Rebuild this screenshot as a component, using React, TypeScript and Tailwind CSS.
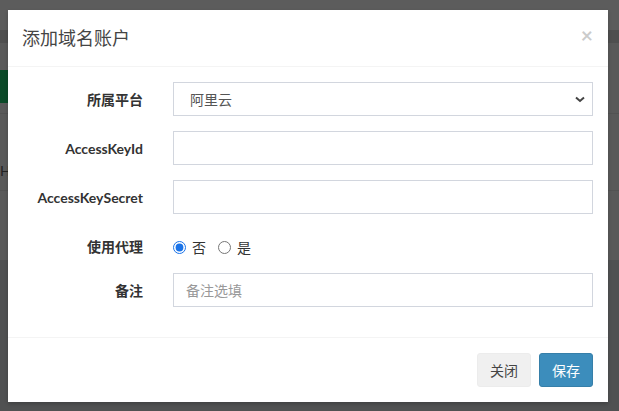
const font = "font-['Lato','Noto_Sans_CJK_SC',sans-serif]";

function Field({
  label,
  children,
  radio,
}: {
  label: string;
  children: React.ReactNode;
  radio?: boolean;
}) {
  return (
    <div className={radio ? "flex h-[29px] items-start" : "flex h-[34px] items-center"}>
      <label
        className={`w-[150px] shrink-0 px-[15px] text-right text-[14px] font-bold text-[#333] ${radio ? "pt-[8px] leading-[20px]" : ""}`}
      >
        {label}
      </label>
      <div className={`flex-1 px-[15px] ${radio ? "pt-[8px]" : ""}`}>{children}</div>
    </div>
  );
}

function TextBox({ placeholder }: { placeholder?: string }) {
  return (
    <div className="flex h-[34px] w-full items-center border border-[#d2d6de] bg-white px-[12px] text-[14px] text-[#999]">
      {placeholder}
    </div>
  );
}

export default function App() {
  return (
    <div className={`relative h-[411px] w-[619px] overflow-hidden bg-[#505152] ${font}`}>
      {/* page under the overlay */}
      <div className="h-[30px] bg-[#5c5c5c]" />
      <div className="h-[13px] bg-[#4f4f4f]" />
      <div className="flex h-[217px] flex-col bg-[#595959]">
        <div className="h-[27px]" />
        <div className="h-[33px] w-[60px] bg-[#0b4a28]" />
        <div className="h-[11px] border-b border-[#525252]" />
        <div className="h-[36px]" />
        <div className="flex h-[40px] items-center text-[14px] text-[#222]">HC</div>
        <div className="border-b border-[#525252]" />
      </div>

      {/* modal */}
      <div className="absolute left-[8px] top-[10px] w-[600px] bg-white shadow-[0_2px_4px_rgba(0,0,0,0.2)]">
        <div className="flex h-[57px] items-center justify-between border-b border-[#f4f4f4] px-[15px]">
          <h4 className="ml-[-1px] text-[18px] font-normal text-[#444]">添加域名账户</h4>
          <span className="mb-[8px] text-[21px] font-bold leading-none text-black opacity-20">×</span>
        </div>

        <div className="flex flex-col gap-[15px] pt-[15px] pb-[30px]">
          <Field label="所属平台">
            <div className="flex h-[34px] w-full items-center justify-between border border-[#d2d6de] bg-white pl-[16px] pr-[7px] text-[14px] text-[#555]">
              <span>阿里云</span>
              <svg width="10" height="7" viewBox="0 0 10 7" className="text-[#444]">
                <path d="M1 1.5 L5 5 L9 1.5" fill="none" stroke="currentColor" strokeWidth="2" />
              </svg>
            </div>
          </Field>
          <Field label="AccessKeyId">
            <TextBox />
          </Field>
          <Field label="AccessKeySecret">
            <TextBox />
          </Field>
          <Field label="使用代理" radio>
            <div className="flex h-[20px] items-center text-[14px] text-[#333]">
              <input type="radio" name="proxy" defaultChecked className="m-0 h-[13px] w-[13px] accent-[#1a73e8]" />
              <span className="ml-[6px]">否</span>
              <input type="radio" name="proxy" className="m-0 ml-[12px] h-[13px] w-[13px]" />
              <span className="ml-[6px]">是</span>
            </div>
          </Field>
          <Field label="备注">
            <TextBox placeholder="备注选填" />
          </Field>
        </div>

        <div className="flex justify-end gap-[8px] border-t border-[#f4f4f4] p-[15px]">
          <button className="h-[34px] rounded-[3px] border border-[#ececec] bg-[#f0f0f0] px-[12px] text-[14px] text-[#444]">
            关闭
          </button>
          <button className="h-[34px] rounded-[3px] border border-[#367fa9] bg-[#3c8dbc] px-[12px] text-[14px] text-white">
            保存
          </button>
        </div>
      </div>
    </div>
  );
}
